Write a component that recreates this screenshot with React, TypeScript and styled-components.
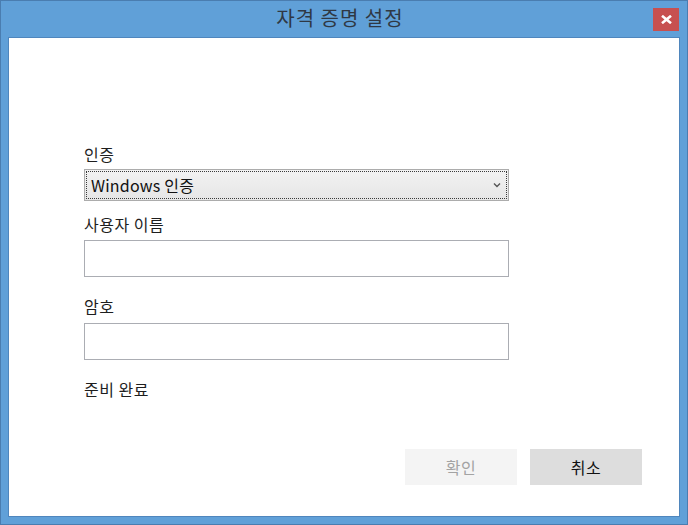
import React from "react";
import styled, { createGlobalStyle } from "styled-components";

const Global = createGlobalStyle`
  html, body { margin: 0; padding: 0; background: #ffffff; }
  * { box-sizing: border-box; }
`;

const FONT = `"Noto Sans CJK KR", "Noto Sans", "Liberation Sans", sans-serif`;

const Window = styled.div`
  width: 688px;
  height: 525px;
  border: 1px solid #4a7db0;
  background: #60a0d8;
  display: flex;
  flex-direction: column;
  font-family: ${FONT};
`;

const TitleBar = styled.div`
  height: 36px;
  display: grid;
  grid-template-columns: 1fr auto 1fr;
  align-items: start;
  padding-right: 8px;
`;

const Title = styled.div`
  grid-column: 2;
  font-size: 20px;
  line-height: 34px;
  color: #2f3844;
  letter-spacing: 1px;
`;

const CloseButton = styled.div`
  grid-column: 3;
  justify-self: end;
  margin-top: 7px;
  width: 26px;
  height: 23px;
  background: #c75050;
  display: flex;
  align-items: center;
  justify-content: center;
`;

const Client = styled.div`
  flex: 1;
  margin: 0 7px 7px 7px;
  background: #ffffff;
  border: 1px solid #4f86bd;
  display: flex;
  flex-direction: column;
  padding: 106px 37px 31px 75px;
`;

const Form = styled.div`
  width: 425px;
  display: flex;
  flex-direction: column;
`;

const Label = styled.div<{ $gap: number }>`
  font-size: 16px;
  line-height: 20px;
  letter-spacing: 0.5px;
  color: #1e1e1e;
  margin-bottom: ${(p) => p.$gap}px;
`;

const Select = styled.div`
  height: 32px;
  border: 1px solid #acacac;
  background: linear-gradient(#f2f2f2, #e6e6e6);
  padding: 1px;
  margin-bottom: 13px;
`;

const SelectInner = styled.div`
  height: 100%;
  border: 1px dotted #3a3a3a;
  display: flex;
  align-items: center;
  justify-content: space-between;
  padding: 0 5px 0 4px;
  font-size: 16px;
  letter-spacing: 0.2px;
  color: #111;
`;

const TextBox = styled.div`
  height: 37px;
  border: 1px solid #abadb3;
  background: #fff;
  margin-bottom: 19px;
`;

const Spacer = styled.div`
  flex: 1;
`;

const ButtonRow = styled.div`
  display: flex;
  justify-content: flex-end;
  gap: 13px;
`;

const Button = styled.div<{ $disabled?: boolean }>`
  width: 112px;
  height: 36px;
  display: flex;
  align-items: center;
  justify-content: center;
  font-size: 16px;
  letter-spacing: 0.5px;
  background: ${(p) => (p.$disabled ? "#f4f4f4" : "#dddddd")};
  color: ${(p) => (p.$disabled ? "#a3a3a3" : "#111111")};
`;

export default function App() {
  return (
    <>
      <Global />
      <Window>
        <TitleBar>
          <Title>자격 증명 설정</Title>
          <CloseButton>
            <svg width="11" height="9" viewBox="0 0 11 9">
              <path d="M1 0.8 L10 8.2 M10 0.8 L1 8.2" stroke="#ffffff" strokeWidth="2.6" />
            </svg>
          </CloseButton>
        </TitleBar>
        <Client>
          <Form>
            <Label $gap={5}>인증</Label>
            <Select>
              <SelectInner>
                <span>Windows 인증</span>
                <svg width="8" height="6" viewBox="0 0 8 6">
                  <path d="M1 1.5 L4 4.5 L7 1.5" stroke="#555" strokeWidth="1.4" fill="none" />
                </svg>
              </SelectInner>
            </Select>
            <Label $gap={6}>사용자 이름</Label>
            <TextBox />
            <Label $gap={7}>암호</Label>
            <TextBox />
            <Label $gap={0}>준비 완료</Label>
          </Form>
          <Spacer />
          <ButtonRow>
            <Button $disabled>확인</Button>
            <Button>취소</Button>
          </ButtonRow>
        </Client>
      </Window>
    </>
  );
}
